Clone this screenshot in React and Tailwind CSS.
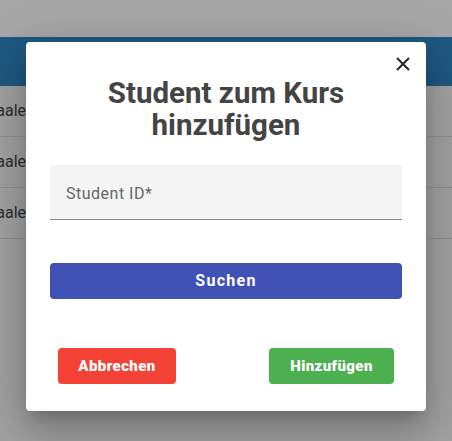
import React from "react";

export default function App() {
  const rows = [0, 1, 2];
  return (
    <div className="relative w-[452px] h-[441px] overflow-hidden bg-[#a2a2a2]" style={{ fontFamily: "Roboto, 'Liberation Sans', sans-serif" }}>
      {/* background page (dimmed) */}
      <div className="flex flex-col">
        <div className="h-[37px] bg-[#a6a6a6]" />
        <div className="h-[49px] bg-[#1f5882]" />
        {rows.map((r) => (
          <div key={r} className="h-[51px] border-b border-[#8e8e8e] flex items-center bg-[#a2a2a2]">
            <div className="w-[26px] flex justify-end overflow-hidden">
              <span className="whitespace-nowrap text-[16px] text-[#2b2b2b]">Skaale</span>
            </div>
          </div>
        ))}
      </div>

      {/* modal */}
      <div className="absolute left-[26px] top-[42px] w-[400px] h-[369px] bg-white rounded-[4px] shadow-[0_11px_15px_-7px_rgba(0,0,0,0.2),0_24px_38px_3px_rgba(0,0,0,0.14),0_9px_46px_8px_rgba(0,0,0,0.12)] px-6 pt-[35px] flex flex-col">
        <button className="absolute right-[16px] top-[15px] w-[14px] h-[14px] flex items-center justify-center">
          <svg width="14" height="14" viewBox="0 0 14 14">
            <path d="M1 1 L13 13 M13 1 L1 13" stroke="#262626" strokeWidth="2" />
          </svg>
        </button>
        <h2 className="text-center text-[29.5px] leading-[32px] font-bold text-[#444444]">
          Student zum Kurs
          <br />
          hinzufügen
        </h2>
        <div className="mt-[24px] h-[55px] bg-[#f4f4f4] rounded-t-[4px] border-b border-[#8a8a8a] flex items-center pl-4 pt-[3px]">
          <span className="text-[16px] text-[#666666] tracking-[0.5px]">Student ID*</span>
        </div>
        <button className="mt-[43px] h-[36px] w-full bg-[#3f51b5] rounded-[4px] text-white text-[16px] font-bold tracking-[1.3px]">
          Suchen
        </button>
        <div className="mt-[49px] px-2 flex justify-between">
          <button className="h-[36px] w-[118px] bg-[#f44336] rounded-[4px] text-white text-[15px] font-black tracking-[0.4px]">
            Abbrechen
          </button>
          <button className="h-[36px] w-[125px] bg-[#4caf50] rounded-[4px] text-white text-[15px] font-black tracking-[0.4px]">
            Hinzufügen
          </button>
        </div>
      </div>
    </div>
  );
}
